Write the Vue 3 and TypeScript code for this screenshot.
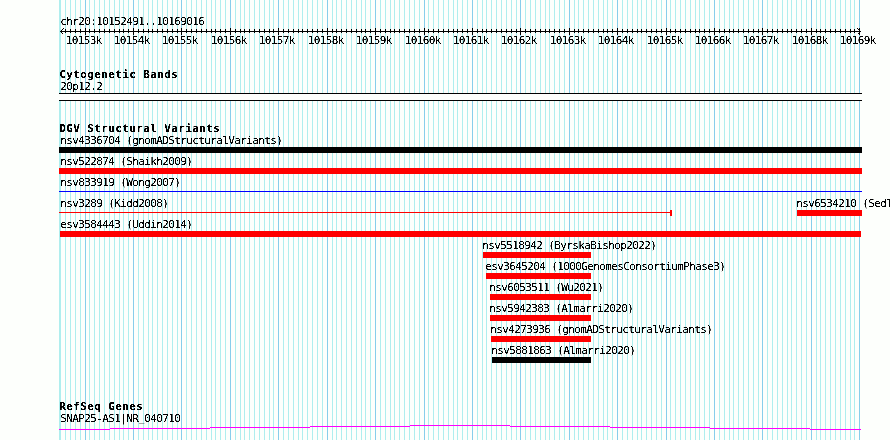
<script setup lang="ts">
interface Variant {
  label: string
  x: number
  top: number
  start: number
  end: number
  tone: 'gain' | 'loss' | 'mixed'
  shape: 'bar' | 'line'
}

const regionStart = 10152491
const regionEnd = 10169016
const toX = (bp: number): number =>
  Math.round(60 + ((bp - regionStart) * 800) / (regionEnd - regionStart))

const marks = Array.from({ length: 166 }, (_, i) => {
  const bp = 10152500 + i * 100
  return { bp, x: toX(bp), major: bp % 1000 === 0 }
})
const majors = marks.filter((m) => m.major)

const headings = [
  { text: 'Cytogenetic Bands', y: 78 },
  { text: 'DGV Structural Variants', y: 132 },
  { text: 'RefSeq Genes', y: 410 },
]

const variants: Variant[] = [
  { label: 'nsv4336704 (gnomADStructuralVariants)', x: 60, top: 134, start: 59, end: 862, tone: 'mixed', shape: 'bar' },
  { label: 'nsv522874 (Shaikh2009)', x: 60, top: 155, start: 59, end: 862, tone: 'loss', shape: 'bar' },
  { label: 'nsv833919 (Wong2007)', x: 60, top: 176, start: 59, end: 862, tone: 'gain', shape: 'line' },
  { label: 'nsv3289 (Kidd2008)', x: 60, top: 197, start: 59, end: 671, tone: 'loss', shape: 'line' },
  { label: 'nsv6534210 (Sedl', x: 796, top: 197, start: 797, end: 862, tone: 'loss', shape: 'bar' },
  { label: 'esv3584443 (Uddin2014)', x: 60, top: 218, start: 60, end: 861, tone: 'loss', shape: 'bar' },
  { label: 'nsv5518942 (ByrskaBishop2022)', x: 482, top: 239, start: 483, end: 591, tone: 'loss', shape: 'bar' },
  { label: 'esv3645204 (1000GenomesConsortiumPhase3)', x: 485, top: 260, start: 486, end: 591, tone: 'loss', shape: 'bar' },
  { label: 'nsv6053511 (Wu2021)', x: 489, top: 281, start: 490, end: 591, tone: 'loss', shape: 'bar' },
  { label: 'nsv5942383 (Almarri2020)', x: 489, top: 302, start: 490, end: 591, tone: 'loss', shape: 'bar' },
  { label: 'nsv4273936 (gnomADStructuralVariants)', x: 490, top: 323, start: 491, end: 591, tone: 'loss', shape: 'bar' },
  { label: 'nsv5881863 (Almarri2020)', x: 491, top: 344, start: 492, end: 591, tone: 'mixed', shape: 'bar' },
]

const intron = [
  [59, 110, 429], [110, 210, 428], [210, 310, 427], [310, 410, 426], [410, 510, 425],
  [510, 610, 426], [610, 710, 427], [710, 810, 428], [810, 861, 429],
].map(([from, to, y]) => ({ from, width: to - from, y }))
</script>

<template>
  <svg class="browser" width="890" height="440" viewBox="0 0 890 440">
    <defs>
      <!-- hard-edged glyphs, as a bitmap font has -->
      <filter id="crisp" x="0" y="0" width="890" height="440" filterUnits="userSpaceOnUse">
        <feComponentTransfer>
          <feFuncA type="linear" slope="4" intercept="-1.3" />
        </feComponentTransfer>
      </filter>
    </defs>

    <g>
      <rect class="minor" x="59" y="0" width="1" height="440" />
      <rect
        v-for="m in marks"
        :key="m.bp"
        :class="m.major ? 'major' : 'minor'"
        :x="m.x"
        y="0"
        width="1"
        height="440"
      />
    </g>

    <g>
      <rect x="60" y="31" width="801" height="1" />
      <rect
        v-for="m in marks.slice(1)"
        :key="m.bp"
        :x="m.x"
        :y="m.major ? 28 : 29"
        width="1"
        :height="m.major ? 7 : 4"
      />
      <path class="arrow" d="M63.5 28.5L60.5 31.5L63.5 34.5M857.5 28.5L860.5 31.5L857.5 34.5" />
    </g>

    <g>
      <rect class="fill" x="59" y="94" width="803" height="6" />
      <rect x="59" y="93" width="803" height="1" />
      <rect x="59" y="100" width="803" height="1" />
    </g>

    <g v-for="v in variants" :key="v.label" :class="v.tone">
      <rect
        :x="v.start"
        :y="v.shape === 'bar' ? v.top + 13 : v.top + 15"
        :width="v.end - v.start"
        :height="v.shape === 'bar' ? 6 : 1"
      />
      <rect v-if="v.end === 671" x="670" :y="v.top + 13" width="2" height="6" />
    </g>

    <g class="gene">
      <rect v-for="s in intron" :key="s.from" :x="s.from" :y="s.y" :width="s.width" height="1" />
    </g>

    <g filter="url(#crisp)">
      <text class="label" x="60.2" y="25">chr20:10152491..10169016</text>
      <text v-for="m in majors" :key="m.bp" class="label" :x="m.x - 19.2" y="44">{{ m.bp / 1000 }}k</text>
      <text v-for="h in headings" :key="h.text" class="heading" x="59.2" :y="h.y">{{ h.text }}</text>
      <text class="label" x="60.2" y="90">20p12.2</text>
      <text v-for="v in variants" :key="v.label" class="label" :x="v.x + 0.2" :y="v.top + 10">{{ v.label }}</text>
      <text class="label" x="60.2" y="422">SNAP25-AS1|NR<tspan dy="-0.6">_</tspan><tspan dy="0.6">040710</tspan></text>
    </g>
  </svg>
</template>

<style>
body {
  background: #fdfffc;
}
</style>

<style scoped>
.browser {
  display: block;
  font-family: 'DejaVu Sans Mono', 'Liberation Mono', monospace;
  shape-rendering: crispEdges;
}
.label {
  font-size: 11px;
  letter-spacing: -0.622px;
  fill: #000;
  white-space: pre;
}
.heading {
  font-size: 11px;
  font-weight: 700;
  letter-spacing: 0.378px;
}
.minor {
  fill: #afeeee;
}
.major {
  fill: #87ceeb;
}
.arrow {
  fill: none;
  stroke: #000;
  stroke-width: 1;
}
.fill {
  fill: #fdfffc;
}
.loss rect {
  fill: #f00;
}
.gain rect {
  fill: #00f;
}
.mixed rect {
  fill: #000;
}
.gene rect {
  fill: #f0f;
}
</style>
